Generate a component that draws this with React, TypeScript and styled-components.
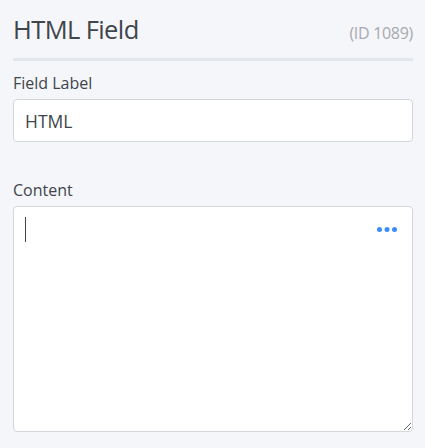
import React from 'react';

import styled, { createGlobalStyle } from 'styled-components';

const GlobalStyle = createGlobalStyle`
  html,
  body {
    margin: 0;
    padding: 0;
    background: #f5f6fa;
  }

  body {
    font-family: 'Open Sans', 'Noto Sans', sans-serif;
    color: #40454b;
  }
`;

const Panel = styled.div`
  padding: 14px 12px 16px 13px;
`;

const Header = styled.div`
  display: flex;
  justify-content: space-between;
  align-items: baseline;
  padding-bottom: 14px;
  border-bottom: 3px solid #e3e6ea;
`;

const Title = styled.h1`
  margin: 0;
  font-size: 25.5px;
  line-height: 30px;
  font-weight: 400;
  letter-spacing: -0.6px;
  color: #40454b;
`;

const FieldId = styled.span`
  font-size: 16px;
  color: #a6aaae;
  letter-spacing: -0.3px;
`;

const Field = styled.div<{ $first?: boolean }>`
  margin-top: ${(p) => (p.$first ? '11px' : '37px')};
`;

const Label = styled.label`
  display: block;
  font-size: 16px;
  line-height: 22px;
  margin-bottom: 5px;
  color: #40454b;
`;

const TextInput = styled.input`
  display: block;
  box-sizing: border-box;
  width: 100%;
  height: 43px;
  padding: 0 11px;
  border: 1px solid #d3d6da;
  border-radius: 4px;
  background: #fff;
  font-family: inherit;
  font-size: 17.5px;
  color: #40454b;
  outline: none;
`;

const Editor = styled.div`
  box-sizing: border-box;
  height: 226px;
  padding: 10px 15px 0 11px;
  border: 1px solid #d3d6da;
  border-radius: 4px;
  background: #fff;
  overflow: auto;
  resize: vertical;
`;

const EditorRow = styled.div`
  display: flex;
  justify-content: space-between;
  align-items: center;
`;

const Caret = styled.span`
  display: block;
  width: 1px;
  height: 25px;
  background: #40454b;
`;

const MoreButton = styled.button`
  display: flex;
  padding: 0;
  border: 0;
  background: none;
  cursor: pointer;
`;

function MoreIcon() {
  return (
    <svg width="20" height="5" viewBox="0 0 20 5">
      <circle cx="2.5" cy="2.5" r="2.5" fill="#3d8cfd" />
      <circle cx="10" cy="2.5" r="2.5" fill="#3d8cfd" />
      <circle cx="17.5" cy="2.5" r="2.5" fill="#3d8cfd" />
    </svg>
  );
}

function App() {
  return (
    <Panel>
      <GlobalStyle />
      <Header>
        <Title>HTML Field</Title>
        <FieldId>(ID 1089)</FieldId>
      </Header>
      <Field $first>
        <Label>Field Label</Label>
        <TextInput defaultValue="HTML" />
      </Field>
      <Field>
        <Label>Content</Label>
        <Editor>
          <EditorRow>
            <Caret />
            <MoreButton aria-label="More">
              <MoreIcon />
            </MoreButton>
          </EditorRow>
        </Editor>
      </Field>
    </Panel>
  );
}

export default App;
